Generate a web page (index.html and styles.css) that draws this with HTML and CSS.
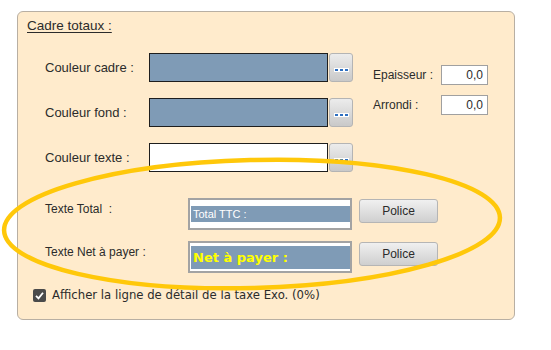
FILE: index.html
```html
<!DOCTYPE html>
<html lang="fr">
<head>
<meta charset="utf-8">
<link rel="stylesheet" href="styles.css">
</head>
<body>
<div class="panel">
  <div class="title">Cadre totaux :</div>
  <div class="colors">
    <div class="color-rows">
      <div class="crow">
        <span class="lbl">Couleur cadre :</span>
        <span class="swatch blue"></span>
        <span class="dots-btn"><span class="dots"><i></i><i></i><i></i></span></span>
      </div>
      <div class="crow">
        <span class="lbl">Couleur fond :</span>
        <span class="swatch blue"></span>
        <span class="dots-btn"><span class="dots"><i></i><i></i><i></i></span></span>
      </div>
      <div class="crow">
        <span class="lbl">Couleur texte :</span>
        <span class="swatch white"></span>
        <span class="dots-btn"><span class="dots"><i></i><i></i><i></i></span></span>
      </div>
    </div>
    <div class="dims">
      <div class="drow"><span class="dlbl">Epaisseur :</span><span class="num">0,0</span></div>
      <div class="drow"><span class="dlbl">Arrondi :</span><span class="num">0,0</span></div>
    </div>
  </div>
  <div class="texts">
    <div class="trow">
      <span class="tlbl">Texte Total&nbsp; :</span>
      <span class="tbox"><span class="stripe small">Total TTC :</span></span>
      <span class="police">Police</span>
    </div>
    <div class="trow">
      <span class="tlbl">Texte Net à payer :</span>
      <span class="tbox"><span class="stripe big">Net à payer :</span></span>
      <span class="police">Police</span>
    </div>
  </div>
  <div class="check">
    <span class="cbox"><svg width="13" height="13" viewBox="0 0 13 13"><path d="M3 6.8 L5.5 9.3 L10 3.8" fill="none" stroke="#fff" stroke-width="1.8"/></svg></span>
    <span class="ctext">Afficher la ligne de détail de la taxe Exo. (0%)</span>
  </div>
</div>
<svg class="ellipse" width="551" height="350" viewBox="0 0 551 350">
  <ellipse cx="252" cy="224" rx="248" ry="64" fill="none" stroke="#ffc80a" stroke-width="4.5" transform="rotate(-1.5 252 224)"/>
</svg>
</body>
</html>
```
FILE: styles.css
```css
html, body {
  margin: 0;
  padding: 0;
  background: #ffffff;
}
body {
  font-family: "DejaVu Sans", sans-serif;
  font-size: 12px;
  color: #2b2b2b;
  position: relative;
  width: 551px;
  height: 350px;
  overflow: hidden;
}
.panel {
  margin: 11px 0 0 17px;
  width: 496px;
  height: 307px;
  box-sizing: content-box;
  border: 1px solid #b8afa3;
  border-radius: 6px;
  background: #ffebcc;
  padding: 0;
  position: relative;
}
.title {
  margin: 6px 0 0 9px;
  font-family: "Liberation Sans", sans-serif;
  font-size: 13.5px;
  line-height: 15px;
  text-decoration: underline;
  text-underline-offset: 2px;
  display: inline-block;
}
.colors {
  display: flex;
  margin-top: 20px;
}
.color-rows {
  display: flex;
  flex-direction: column;
  gap: 16px;
  margin-left: 27px;
}
.crow {
  display: flex;
  align-items: center;
  height: 29px;
}
.lbl {
  width: 104px;
  font-family: "Liberation Sans", sans-serif;
  font-size: 13px;
}
.swatch {
  width: 177px;
  height: 27px;
  border: 1px solid #1e1e1e;
}
.swatch.blue { background: #7f9bb6; }
.swatch.white { background: #ffffff; }
.dots-btn {
  width: 22px;
  height: 27px;
  margin-left: 1px;
  border: 1px solid #b4b4b4;
  border-radius: 3px;
  background: linear-gradient(#ececec, #c9c9c9);
  display: flex;
  align-items: center;
  justify-content: center;
}
.dots {
  display: flex;
  gap: 2px;
  background: #fff;
  padding: 1px;
  margin-top: 5px;
}
.dots i {
  display: block;
  width: 3px;
  height: 2px;
  background: #2e6fc0;
}
.dims {
  display: flex;
  flex-direction: column;
  gap: 10px;
  margin: 12px 0 0 20px;
}
.drow {
  display: flex;
  align-items: center;
  height: 20px;
}
.dlbl {
  width: 68px;
  font-family: "Liberation Sans", sans-serif;
  font-size: 12px;
}
.num {
  width: 41px;
  height: 18px;
  border: 1px solid #a0a0a0;
  background: #fff;
  text-align: right;
  padding-right: 4px;
  font-family: "Liberation Sans", sans-serif;
  font-size: 12px;
  line-height: 18px;
}
.texts {
  display: flex;
  flex-direction: column;
  gap: 11px;
  margin: 26px 0 0 27px;
}
.trow {
  display: flex;
  align-items: flex-start;
  height: 32px;
}
.tlbl {
  width: 143px;
  padding-top: 4px;
  font-family: "Liberation Sans", sans-serif;
  font-size: 12px;
}
.tbox {
  width: 160px;
  height: 28px;
  border: 2px solid #a3a3a3;
  background: #fff;
  display: flex;
  align-items: center;
}
.stripe {
  display: block;
  width: 159px;
  margin-left: 1px;
  background: #7f9bb6;
}
.stripe.small {
  height: 16px;
  color: #ffffff;
  font-family: "Liberation Sans", sans-serif;
  font-size: 11px;
  line-height: 16px;
  padding-left: 2px;
  box-sizing: border-box;
}
.stripe.big {
  height: 23px;
  color: #ffff00;
  font-family: "DejaVu Sans", sans-serif;
  font-weight: bold;
  font-size: 13px;
  line-height: 23px;
  padding-left: 2px;
  box-sizing: border-box;
}
.police {
  margin: 1px 0 0 7px;
  width: 77px;
  height: 22px;
  border: 1px solid #b5b5b5;
  border-radius: 3px;
  background: linear-gradient(#f0f0f0, #cfcfcf);
  text-align: center;
  line-height: 22px;
  font-family: "Liberation Sans", sans-serif;
  font-size: 12px;
}
.check {
  display: flex;
  align-items: center;
  margin: 15px 0 0 15px;
}
.cbox {
  width: 13px;
  height: 13px;
  border-radius: 2px;
  background: #4a4a4a;
  display: flex;
}
.ctext {
  margin-left: 6px;
  font-family: "DejaVu Sans", sans-serif;
  font-size: 11.7px;
}
.ellipse {
  position: absolute;
  left: 0;
  top: 0;
  pointer-events: none;
}
```
